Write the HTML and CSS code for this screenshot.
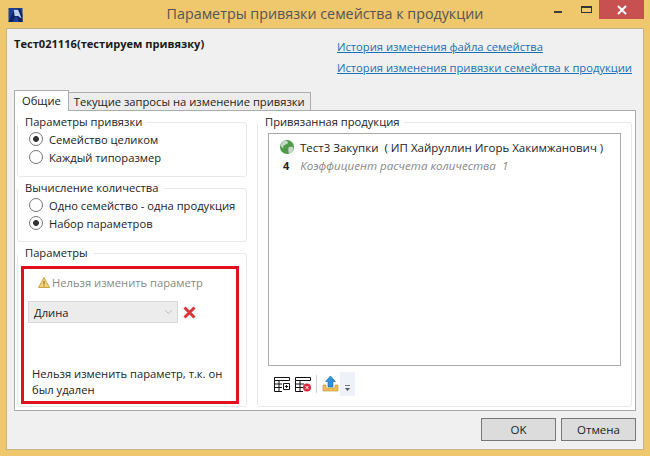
FILE: index.html
```html
<!DOCTYPE html>
<html lang="ru">
<head>
    <meta charset="UTF-8">
    <title>Параметры привязки семейства к продукции</title>
    <link rel="stylesheet" href="styles.css">
</head>
<body>
    <div class="window">
        <div class="titlebar">
            <svg class="app-icon" width="15" height="14" viewBox="0 0 16 16">
                <rect width="16" height="16" fill="#1c3f94"/>
                <path d="M0 16 L7 1 H13 L16 8 V16 H12 L10 10 H7 L5 16 Z" fill="#0d2260"/>
                <path d="M6 2 H11 L15 12 L11 9 H7 Z" fill="#bcd0ee"/>
            </svg>
            <div class="title">Параметры привязки семейства к продукции</div>
            <div class="win-buttons">
                <span class="win-min"></span>
                <span class="win-max"></span>
                <span class="win-close">
                    <svg width="10" height="10" viewBox="0 0 10 10"><path d="M1 1 L9 9 M9 1 L1 9" stroke="#fff" stroke-width="2"/></svg>
                </span>
            </div>
        </div>

        <div class="client">
            <div class="top">
                <div class="family-name">Тест021116(тестируем привязку)</div>
                <div class="links">
                    <a href="#">История изменения файла семейства</a>
                    <a href="#">История изменения привязки семейства к продукции</a>
                </div>
            </div>

            <div class="tabs">
                <div class="tab active">Общие</div>
                <div class="tab">Текущие запросы на изменение привязки</div>
            </div>

            <div class="panel">
                <div class="left">
                    <fieldset class="group group-radio">
                        <legend>Параметры привязки</legend>
                        <label class="radio checked">Семейство целиком</label>
                        <label class="radio">Каждый типоразмер</label>
                    </fieldset>
                    <fieldset class="group group-radio group-calc">
                        <legend>Вычисление количества</legend>
                        <label class="radio">Одно семейство - одна продукция</label>
                        <label class="radio checked">Набор параметров</label>
                    </fieldset>
                    <fieldset class="group group-params">
                        <legend>Параметры</legend>
                        <div class="highlight">
                            <div class="warning">
                                <svg width="12" height="11" viewBox="0 0 12 11">
                                    <path d="M6 .5 L11.5 10.5 H.5 Z" fill="#f3d27a" stroke="#c9a548"/>
                                    <path d="M6 4 V7.5 M6 8.5 V9.5" stroke="#7a6420"/>
                                </svg>
                                Нельзя изменить параметр
                            </div>
                            <div class="param-row">
                                <div class="select">
                                    Длина
                                    <svg width="7" height="5" viewBox="0 0 7 5"><path d="M.5 .5 L3.5 3.5 L6.5 .5" fill="none" stroke="#bbb"/></svg>
                                </div>
                                <svg width="13" height="13" viewBox="0 0 13 13">
                                    <path d="M1.5 1.5 L11.5 11.5 M11.5 1.5 L1.5 11.5" stroke="#d9363a" stroke-width="3"/>
                                </svg>
                            </div>
                            <div class="param-note">Нельзя изменить параметр, т.к. он был удален</div>
                        </div>
                    </fieldset>
                </div>

                <fieldset class="group group-products">
                    <legend>Привязанная продукция</legend>
                    <div class="product-list">
                        <div class="product">
                            <svg width="14" height="14" viewBox="0 0 14 14">
                                <circle cx="7" cy="7" r="7" fill="#4f9a4a"/>
                                <path d="M5 0.5 C8 1 9 3 7 4 C5 5 3 5 3.5 7.5 C4 9 2 8 1 6 C0.8 3.5 3 1 5 0.5 Z M9 7 C11 6.5 13 7 13.5 8 C13 11 11 13 9 13.5 C8 11 8 8.5 9 7 Z" fill="#c9d6cc"/>
                            </svg>
                            <span>Тест3 Закупки  ( ИП Хайруллин Игорь Хакимжанович )</span>
                        </div>
                        <div class="coef"><b>4</b><i>Коэффициент расчета количества  1</i></div>
                    </div>
                    <div class="toolbar">
                        <svg width="16" height="15" viewBox="0 0 16 15" fill="none" stroke="#111">
                            <path d="M.5 .5 H15.5 V3.5 H.5 Z M.5 3.5 V14.5 H8 M.5 7 H8 M.5 10.5 H8 M5 3.5 V14.5"/>
                            <path d="M9.5 6.5 H15.5 V12.5 H9.5 Z M11 9.5 H14 M12.5 8 V11"/>
                        </svg>
                        <svg width="16" height="15" viewBox="0 0 16 15" fill="none" stroke="#111">
                            <path d="M.5 .5 H15.5 V3.5 H.5 Z M.5 3.5 V14.5 H8 M.5 7 H9 M.5 10.5 H8 M5 3.5 V14.5"/>
                            <circle cx="12" cy="10.5" r="4" fill="#d8263c" stroke="none"/>
                            <path d="M10.3 8.8 L13.7 12.2 M13.7 8.8 L10.3 12.2" stroke="#fff"/>
                        </svg>
                        <span class="tool-sep"></span>
                        <svg width="17" height="16" viewBox="0 0 17 16">
                            <path d="M1 9 H4 V12 H13 V9 H16 V15 H1 Z" fill="#f0c050" stroke="#b98e2a" stroke-width=".6"/>
                            <path d="M8.5 0 L13.5 5.5 H11 V11 H6 V5.5 H3.5 Z" fill="#2f8fd8" stroke="#1d6aa8" stroke-width=".6"/>
                        </svg>
                        <span class="tool-more">
                            <svg width="5" height="6" viewBox="0 0 5 6"><path d="M0 .5 H5" stroke="#777"/><path d="M0 3 H5 L2.5 6 Z" fill="#555"/></svg>
                        </span>
                    </div>
                </fieldset>
            </div>

            <div class="buttons">
                <button>OK</button>
                <button>Отмена</button>
            </div>
        </div>
    </div>
</body>
</html>
```

FILE: styles.css
```css
* { margin: 0; padding: 0; box-sizing: border-box; }
html, body { width: 650px; height: 456px; overflow: hidden; }
body {
    font-family: 'Open Sans', 'Noto Sans', sans-serif;
    font-size: 11.2px; color: #222; background: #efc76c;
}
.window { height: 456px; display: flex; flex-direction: column; }

.titlebar { height: 28px; flex: none; display: flex; align-items: flex-start; position: relative; }
.app-icon { margin: 8px 0 0 8px; }
.title {
    position: absolute; left: 0; right: 0; top: 4px; text-align: center;
    font-size: 14.3px; color: #555; line-height: 20px;
}
.win-buttons { margin-left: auto; margin-right: 6px; display: flex; position: relative; }
.win-min { width: 8px; height: 2px; background: #3c3c3c; margin: 11px 19px 0 0; }
.win-max { width: 11px; height: 7px; border: 1px solid #333; border-top-width: 2px; margin: 6px 7px 0 0; }
.win-close {
    width: 45px; height: 19px; background: #c75050;
    display: flex; align-items: center; justify-content: center;
}

.client {
    flex: 1; margin: 0 6px 6px; background: #f0f0f0; border: 1px solid #c2b48a;
    padding: 0 7px; display: flex; flex-direction: column;
}
.top { height: 61px; display: flex; justify-content: space-between; padding-top: 7px; }
.family-name { font-weight: 700; font-size: 11.1px; color: #1a1a1a; }
.links { display: flex; flex-direction: column; gap: 5px; width: 296px; padding-top: 3px; margin-right: 3px; }
.links a { color: #1a6fb5; line-height: 16px; white-space: nowrap; }

.tabs { display: flex; height: 21px; align-items: flex-end; position: relative; z-index: 1; }
.tab {
    height: 19px; line-height: 17px; padding: 0 5px; background: #ececec;
    border: 1px solid #acacac; border-left: none; white-space: nowrap;
}
.tab.active {
    height: 21px; line-height: 20px; background: #fff; padding: 0 7px;
    border-left: 1px solid #acacac; border-bottom: none;
}

.panel {
    height: 301px; flex: none; margin-top: -1px; background: #fff; border: 1px solid #acacac;
    padding: 3px 3px 3px 2px; display: flex; gap: 10px;
}
.left { width: 230px; display: flex; flex-direction: column; gap: 3px; }

.group { border: 1px solid #e8e8e8; border-radius: 3px; min-width: 0; }
.group legend { padding: 0 5px 0 7px; line-height: 16px; white-space: nowrap; }
.group-radio { height: 63px; }
.group-calc { height: 62px; }
.group-params { flex: 1; padding: 0 7px 2px 3px; }
.group-params legend { margin-left: -3px; }
.group-products { flex: 1; padding: 0 10px; }
.group-products legend { margin-left: -10px; }

.radio { display: flex; align-items: center; height: 18px; gap: 6px; margin-left: 11px; white-space: nowrap; }
.radio::before {
    content: ''; width: 12px; height: 12px; flex: none; border-radius: 50%;
    border: 1px solid #777; background: #fff;
}
.radio.checked::before { background: radial-gradient(circle, #333 0 2.6px, #fff 3.2px); }

.highlight {
    height: 138px; margin-top: 5px; border: 3px solid #e0101f; padding: 4px 4px 3px 4px;
    display: flex; flex-direction: column;
}
.warning { display: flex; align-items: center; gap: 2px; color: #888; margin-left: 10px; height: 18px; }
.param-row { display: flex; align-items: center; gap: 5px; margin-top: 10px; }
.select {
    width: 150px; height: 22px; background: #ececec; border: 1px solid #d9d9d9;
    padding: 0 5px; display: flex; align-items: center; justify-content: space-between;
}
.param-note { margin-top: auto; margin-left: 4px; line-height: 16px; }

.product-list { height: 233px; margin-top: 3px; border: 1px solid #ababab; padding: 3px 11px; font-size: 11.5px; }
.product { display: flex; align-items: center; gap: 6px; height: 20px; white-space: pre; }
.coef { display: flex; gap: 11px; height: 17px; align-items: center; margin-left: 3px; }
.coef b { font-size: 11px; }
.coef i { color: #888; font-size: 11.6px; white-space: pre; }

.toolbar { display: flex; align-items: center; gap: 5px; height: 24px; margin-top: 6px; margin-left: 6px; }
.tool-sep { width: 1px; height: 18px; background: #cfcfcf; }
.tool-more {
    width: 15px; height: 24px; background: #eef2f8; margin-left: -4px;
    display: flex; align-items: flex-end; justify-content: center; padding-bottom: 5px;
}

.buttons { display: flex; justify-content: flex-end; gap: 5px; margin-top: 7px; }
.buttons button {
    width: 75px; height: 23px; background: #dcdcdc; border: 1px solid #777;
    font: inherit; font-size: 11.5px; color: #222;
}
```
